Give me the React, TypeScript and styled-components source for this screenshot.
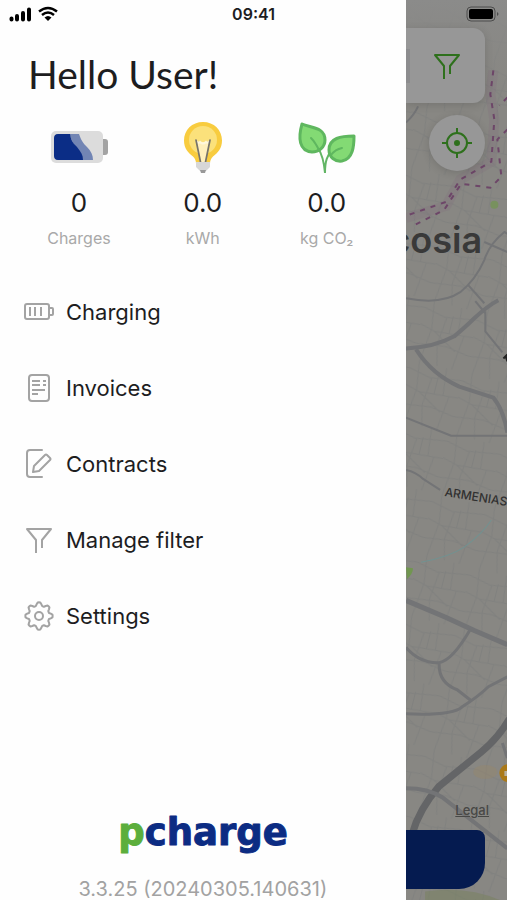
import React from "react";
import styled, { createGlobalStyle } from "styled-components";

const GlobalStyle = createGlobalStyle`
  *, *::before, *::after { box-sizing: border-box; }
  body { margin: 0; background: #fefefe; font-family: Inter, "Liberation Sans", sans-serif; color: #1d1d1f; }
`;

const Screen = styled.div`
  position: relative;
  display: flex;
  min-height: 100vh;
  overflow: hidden;
`;

const StatusBar = styled.header`
  position: absolute;
  inset: 0 0 auto 0;
  z-index: 2;
  display: grid;
  grid-template-columns: 1fr auto 1fr;
  align-items: center;
  height: 28px;
  padding: 0 8px;
`;

const StatusSide = styled.div<{ $end?: boolean }>`
  display: flex;
  gap: 5px;
  align-items: center;
  justify-content: ${(p) => (p.$end ? "flex-end" : "flex-start")};
`;

const Clock = styled.time`
  font-size: 16px;
  line-height: 20px;
  font-weight: 600;
`;

const Drawer = styled.aside`
  flex: 0 0 80%;
  display: flex;
  flex-direction: column;
  min-height: 100vh;
  padding-top: 48px;
  background: #fefefe;
`;

const Greeting = styled.h1`
  margin: 0 0 20px;
  padding-left: 28px;
  font-family: Lato, "Noto Sans", sans-serif;
  font-size: 39px;
  line-height: 52px;
  font-weight: 400;
`;

const Stats = styled.dl`
  display: grid;
  grid-template-columns: repeat(3, 1fr);
  margin: 0 0 26px;
  padding: 0 17px;
`;

const Stat = styled.div`
  display: flex;
  flex-direction: column;
  align-items: center;
`;

const StatIcon = styled.div`
  height: 54px;
  display: flex;
  align-items: center;
`;

const StatValue = styled.dd`
  order: 1;
  margin: 12px 0 8px;
  font-size: 26px;
  line-height: 34px;
`;

const StatLabel = styled.dt`
  order: 2;
  font-size: 16px;
  line-height: 20px;
  color: #a9a9a9;
`;

const Menu = styled.nav`
  display: flex;
  flex-direction: column;
`;

const MenuLink = styled.a`
  display: flex;
  align-items: center;
  gap: 12px;
  padding: 23px 24px;
  font-size: 22px;
  line-height: 30px;
  color: inherit;
  text-decoration: none;

  svg { flex: none; }
`;

const Footer = styled.footer`
  display: flex;
  flex-direction: column;
  align-items: center;
  margin-top: auto;
`;

const Version = styled.p`
  margin: 12px 0 0;
  font-size: 20px;
  line-height: 22px;
  color: #a2a2a2;
`;

const MapPane = styled.main`
  position: relative;
  flex: 1;
  min-width: 0;
  display: flex;
  flex-direction: column;
  padding: 28px 22px 11px 0;
  background: #888783;
  overflow: hidden;
`;

const MapCanvas = styled.svg`
  position: absolute;
  inset: 0;
  width: 100%;
  height: 100%;
`;

const SearchCard = styled.div`
  position: relative;
  display: flex;
  align-items: center;
  justify-content: space-between;
  height: 75px;
  border-radius: 0 12px 12px 0;
  background: #979797;
  box-shadow: 0 2px 8px rgba(0, 0, 0, 0.14);
`;

const Divider = styled.span`
  width: 4px;
  height: 34px;
  background: #8c8c8e;
`;

const IconButton = styled.button`
  display: grid;
  place-items: center;
  width: 76px;
  height: 72px;
  padding: 0;
  border: 0;
  background: none;
`;

const LocateButton = styled(IconButton)`
  position: relative;
  align-self: flex-end;
  width: 56px;
  height: 56px;
  margin-top: 12px;
  border-radius: 50%;
  background: #979797;
  box-shadow: 0 2px 8px rgba(0, 0, 0, 0.14);
`;

const MapFooter = styled.div`
  position: relative;
  display: flex;
  flex-direction: column;
  margin-top: auto;
  gap: 10px;
`;

const LegalLink = styled.a`
  align-self: flex-end;
  margin-right: -4px;
  font-size: 13px;
  line-height: 20px;
  font-weight: 500;
  color: #484846;
`;

const PrimaryButton = styled.button`
  height: 59px;
  border: 0;
  border-radius: 0 8px 26px 0;
  background: #051b50;
`;

const BatteryStat = () => (
  <svg width="60" height="34" viewBox="-2 0 60 34" aria-hidden="true">
    <rect x="48" y="9" width="9" height="16" rx="3" fill="#a3a3a3" />
    <rect x="0" y="1" width="52" height="32" rx="5" fill="#dcdcdc" />
    <path d="M18 4h10c2 6 4 9 8 13 4 4 6 8 6 13H30z" fill="#7285b4" />
    <path d="M7 4h12c1 7 4 10 7 13 4 5 6 8 6 13H7c-3 0-4-2-4-4V8c0-2 1-4 4-4z" fill="#0b2d86" />
  </svg>
);

const BulbStat = () => (
  <svg width="40" height="54" viewBox="0 0 40 54" aria-hidden="true">
    <path d="M20 2C9 2 1 10 1 20.500c0 8 4 12 9 16 2 2 3 4 3 7h14c0-3 1-5 3-7 5-4 9-8 9-16C39 10 31 2 20 2z" fill="#f8cc3f" />
    <circle cx="20" cy="20" r="14" fill="#fbe17b" />
    <path d="M14 22h12l-3 20h-6z" fill="#fff0bc" />
    <path d="M14 21q1 3 3 1 3 3 6 0 2 2 3-1" fill="none" stroke="#fff8dd" strokeWidth="2" />
    <path d="M13 20l4.500 22M27 20l-4.500 22" fill="none" stroke="#77746b" strokeWidth="1.700" strokeLinecap="round" />
    <path d="M13 42h14v5l-4 4h-6l-4-4z" fill="#d7d7d7" />
    <path d="M17 50h6l-1 3h-4z" fill="#999" />
  </svg>
);

const LeafStat = () => (
  <svg width="60" height="54" viewBox="0 0 60 54" aria-hidden="true">
    <path d="M21 28c4 6 6 13 7 25 0-12 2-18 8-23" fill="none" stroke="#62b565" strokeWidth="2" />
    <path d="M5 4c9 4 23 3 23 16 0 7-6 12-13 12C2 31 1 18 5 4z" fill="#83da74" stroke="#5fb75f" strokeWidth="3" strokeLinejoin="round" />
    <path d="M57 16c0 10-1 23-12 25-7 1-13-4-13-11 0-12 12-14 25-14z" fill="#83da74" stroke="#5fb75f" strokeWidth="3" strokeLinejoin="round" />
    <path d="M14 18c4 4 6 8 8 12M34 35c3-4 6-6 11-7" fill="none" stroke="#5fb75f" strokeWidth="2" strokeLinecap="round" />
  </svg>
);

const iconProps = {
  width: 30,
  height: 30,
  viewBox: "0 0 30 30",
  fill: "none",
  stroke: "#a3a3a3",
  strokeWidth: 2,
  "aria-hidden": true,
} as const;

const gearPath = (() => {
  const points: string[] = [];
  for (let i = 0; i < 64; i += 1) {
    const angle = (i / 64) * Math.PI * 2;
    const wave = Math.cos(angle * 8);
    const radius = 12 + 1.7 * Math.tanh(wave * 2);
    points.push(`${(15 + radius * Math.cos(angle)).toFixed(2)} ${(15 + radius * Math.sin(angle)).toFixed(2)}`);
  }
  return `M${points.join("L")}Z`;
})();

const FunnelShape = () => <path d="M12 28V15L3 4h24l-9 11v8" strokeLinejoin="round" />;

const menu = [
  {
    label: "Charging",
    icon: (
      <svg {...iconProps}>
        <rect x="1" y="7" width="24" height="15" rx="2" />
        <path d="M26 11h2q1 0 1 1v5q0 1-1 1h-2M6 10v9M11 10v9M17 10v9" />
      </svg>
    ),
  },
  {
    label: "Invoices",
    icon: (
      <svg {...iconProps}>
        <rect x="5" y="2" width="20" height="26" rx="3" />
        <path d="M8 8h8M19 8h3M8 12h8M19 12h3M8 17h13M8 21h6" />
      </svg>
    ),
  },
  {
    label: "Contracts",
    icon: (
      <svg {...iconProps} strokeLinecap="round" strokeLinejoin="round">
        <path d="M18 1H6Q3 1 3 4v21q0 3 3 3h12" />
        <path d="M21 6q1-1 2 0l3 3q1 1 0 2L15 22l-6 1 1-6z" />
      </svg>
    ),
  },
  { label: "Manage filter", icon: <svg {...iconProps}><FunnelShape /></svg> },
  {
    label: "Settings",
    icon: (
      <svg {...iconProps} strokeLinejoin="round">
        <path d={gearPath} />
        <circle cx="15" cy="15" r="4" />
      </svg>
    ),
  },
];

const stats = [
  { label: "Charges", value: "0", icon: <BatteryStat /> },
  { label: "kWh", value: "0.0", icon: <BulbStat /> },
  { label: "kg CO₂", value: "0.0", icon: <LeafStat /> },
];

const CityMap = () => (
  <MapCanvas viewBox="406 0 101 900" preserveAspectRatio="xMinYMin slice" aria-hidden="true">
    <defs>
      <linearGradient id="sky" x1="0" y1="0" x2="0" y2="1">
        <stop offset="0" stopColor="#8b8b8a" />
        <stop offset="1" stopColor="#888783" stopOpacity="0" />
      </linearGradient>
      <pattern id="streets" width="54" height="62" patternUnits="userSpaceOnUse" patternTransform="rotate(14)">
        <path d="M0 8l22 5 32-5M0 25l15 4 39-3M0 45l30-4 24 4M8 0l4 27-4 35M24 13l-3 28 5 21M36 0l3 27M45 27l-4 35M15 29l25 15M30 10v18" fill="none" stroke="#797b7b" strokeWidth="1" />
      </pattern>
    </defs>
    <rect x="406" width="101" height="900" fill="#888783" />
    <rect x="406" width="101" height="900" fill="url(#streets)" opacity="0.5" />
    <rect x="406" width="101" height="110" fill="url(#sky)" />
    <g fill="none" stroke="#737476" strokeLinejoin="round">
      <path d="M406 122q8-7 12-16M406 297q35 7 54-6 15-12 24-32 5-16 20-28l3 2M468 284l16 18M484 241l23 10" strokeWidth="2" />
      <path d="M406 347q28-1 48-12 12-10 20-18 14-13 24-18M416 348q16 25 43 37l34 11q10 12 14 35" strokeWidth="4" />
      <path d="M485 310v20l17 21M475 300l10 12M406 416l45 18h56M406 468q10 2 17 9l17 11" strokeWidth="2" />
      <path d="M406 598l40 17 28 13 33 14" strokeWidth="5" />
      <path d="M406 645q14 16 33 15 13-2 31-33M439 660q-1 20 18 27l14 11M406 711q46 2 56-7 17-11 26-20l19-10M502 740l5 15" strokeWidth="3" />
      <path d="M412 831q7-25 27-48l42-34q17-14 28-33" stroke="#646567" strokeWidth="7" />
      <path d="M406 785q22 0 36 9l65 51" strokeWidth="4" />
    </g>
    <path d="M421 560q28-5 43-15 18-13 27-27" fill="none" stroke="#719291" strokeWidth="1" />
    <path d="M406 565l7 1q0 5-6 11z" fill="#719650" />
    <circle cx="494" cy="204" r="4" fill="#78915e" />
    <ellipse cx="485" cy="769" rx="12" ry="7" fill="#98876a" opacity="0.4" />
    <path d="M425 888q45-7 82 12h-82z" fill="#77815e" opacity="0.5" />
    <g fill="none" stroke="#80657b" strokeWidth="10" opacity="0.18">
      <path d="M493 70l-3 24 4 25-3 42-31 18-14 26-40 12" />
    </g>
    <g fill="none" stroke="#6d4668" strokeWidth="2" strokeDasharray="5 6">
      <path d="M493 70l-3 24 4 25-3 42-31 18-14 22-40 14" />
      <path d="M507 97l-8 8M507 129l-10 10 4 37-11 11-29-4-17 26-33 17" />
    </g>
    <g fontFamily="Inter, sans-serif">
      <text x="482" y="252" textAnchor="end" fontSize="36" fontWeight="600" fill="#393939">Nicosia</text>
      <text x="444" y="494" fontSize="12" fontWeight="500" fill="#303030" transform="rotate(9 444 494)">ARMENIAS</text>
    </g>
    <path d="M503 357l4-4M505 354l2 6" stroke="#222" strokeWidth="2" />
    <circle cx="508" cy="770" r="9" fill="#aa7918" />
    <path d="M504 772v-4h3v-3h5v8h-8z" fill="#b7b09f" />
  </MapCanvas>
);

export default function App() {
  return (
    <Screen>
      <GlobalStyle />
      <StatusBar>
        <StatusSide>
          <svg width="24" height="16" viewBox="0 0 24 16" role="img" aria-label="Signal">
            <path d="M3.500 13.500v-1M9 13.500V10M15 13.500V7M21 13.500V3.500" stroke="#000" strokeWidth="4" strokeLinecap="round" />
          </svg>
          <svg width="22" height="16" viewBox="0 0 20 16" role="img" aria-label="Wi-Fi">
            <path d="M1 5.500q9-7 18 0M4 9q6-5 12 0" fill="none" stroke="#000" strokeWidth="2.500" />
            <path d="M6.500 11.500q3.500-3 7 0L10 15z" />
          </svg>
        </StatusSide>
        <Clock>09:41</Clock>
        <StatusSide $end>
          <svg width="33" height="16" viewBox="0 0 33 16" role="img" aria-label="Battery">
            <rect x="1" y="1" width="28" height="14" rx="4" fill="none" stroke="#4c4c4c" />
            <rect x="3" y="3" width="24" height="10" rx="2" />
            <path d="M31 6q3 2 0 4z" fill="#4c4c4c" />
          </svg>
        </StatusSide>
      </StatusBar>
      <Drawer>
        <Greeting>Hello User!</Greeting>
        <Stats>
          {stats.map((s) => (
            <Stat key={s.label}>
              <StatIcon>{s.icon}</StatIcon>
              <StatLabel>{s.label}</StatLabel>
              <StatValue>{s.value}</StatValue>
            </Stat>
          ))}
        </Stats>
        <Menu aria-label="Main">
          {menu.map((m) => (
            <MenuLink key={m.label} href="#">
              {m.icon}
              {m.label}
            </MenuLink>
          ))}
        </Menu>
        <Footer>
          <svg width="176" height="56" viewBox="0 0 176 56" role="img" aria-label="pcharge">
            <text x="88" y="35" textAnchor="middle" fontFamily="DejaVu Sans, sans-serif" fontSize="37" fontWeight="700" strokeWidth="1" strokeLinejoin="round" fill="#0c2c83" stroke="#0c2c83">
              <tspan fill="#5cae3c" stroke="#5cae3c">p</tspan>charge
            </text>
          </svg>
          <Version>3.3.25 (20240305.140631)</Version>
        </Footer>
      </Drawer>
      <MapPane>
        <CityMap />
        <SearchCard>
          <Divider />
          <IconButton aria-label="Filter">
            <svg {...iconProps} stroke="#2e701c"><FunnelShape /></svg>
          </IconButton>
        </SearchCard>
        <LocateButton aria-label="Locate me">
          <svg {...iconProps} stroke="#2e701c">
            <circle cx="15" cy="15" r="10" />
            <circle cx="15" cy="15" r="2" fill="#2e701c" />
            <path d="M15 0v6M15 24v6M0 15h6M24 15h6" />
          </svg>
        </LocateButton>
        <MapFooter>
          <LegalLink href="#">Legal</LegalLink>
          <PrimaryButton aria-label="Start charging" />
        </MapFooter>
      </MapPane>
    </Screen>
  );
}
